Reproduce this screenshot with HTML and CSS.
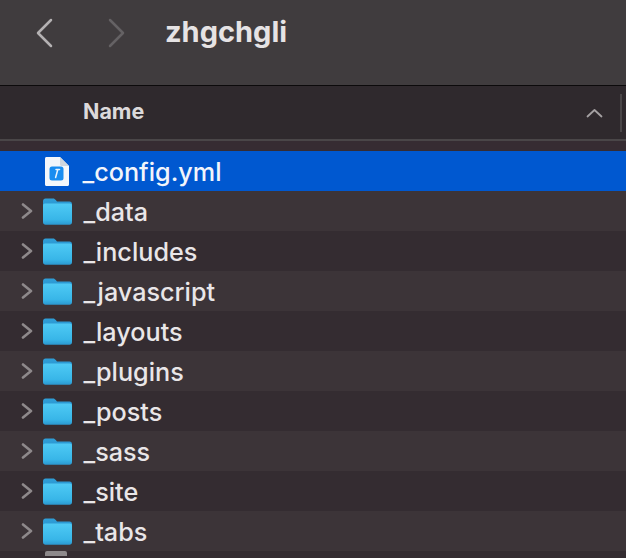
FILE: index.html
```html
<!DOCTYPE html>
<html>
<head>
    <title>zhgchgli</title>
    <link rel="stylesheet" href="styles.css">
</head>
<body>
    <svg class="defs" width="0" height="0">
        <defs>
            <linearGradient id="folderBack" x1="0" y1="0" x2="0" y2="1">
                <stop offset="0" stop-color="#2f9fd8"/>
                <stop offset="1" stop-color="#2a93cf"/>
            </linearGradient>
            <linearGradient id="folderFront" x1="0" y1="0" x2="0" y2="1">
                <stop offset="0" stop-color="#4fcaf5"/>
                <stop offset="0.75" stop-color="#38b6e8"/>
                <stop offset="1" stop-color="#2b98d0"/>
            </linearGradient>
            <symbol id="folder" viewBox="0 0 29 27">
                <path d="M0 3.500C0 1.500 1 .5 2.500.5h7.500c1.400 0 1.900.6 2.800 1.600L14 3.500h12.500c1.600 0 2.500 1 2.500 2.500v4H0z" fill="url(#folderBack)"/>
                <path d="M0 7.500C0 6.300 .8 5.500 2 5.500h25c1.200 0 2 .8 2 2V24c0 1.700-1 2.700-2.500 2.700h-24C1 26.700 0 25.700 0 24z" fill="url(#folderFront)"/>
            </symbol>
            <symbol id="chevron" viewBox="0 0 12 16">
                <path d="M2 1.500l8 6.500-8 6.500" fill="none" stroke="#8e898b" stroke-width="2.600" stroke-linecap="round" stroke-linejoin="round"/>
            </symbol>
        </defs>
    </svg>

    <div class="toolbar">
        <svg class="nav-arrow" width="18" height="30" viewBox="0 0 18 30">
            <path d="M16 2L3 15l13 13" fill="none" stroke="#b5b2b3" stroke-width="2.500" stroke-linecap="round" stroke-linejoin="round"/>
        </svg>
        <svg class="nav-arrow nav-forward" width="18" height="30" viewBox="0 0 18 30">
            <path d="M2 2l13 13L2 28" fill="none" stroke="#656264" stroke-width="2.500" stroke-linecap="round" stroke-linejoin="round"/>
        </svg>
        <h1 class="title">zhgchgli</h1>
    </div>

    <div class="col-header">
        <span class="col-name">Name</span>
        <svg class="sort-arrow" width="17" height="10" viewBox="0 0 17 10">
            <path d="M1.500 8.500L8.500 2l7 6.500" fill="none" stroke="#a5a1a3" stroke-width="1.800" stroke-linecap="round" stroke-linejoin="round"/>
        </svg>
        <span class="col-divider"></span>
    </div>

    <div class="gap-row"></div>

    <div class="row selected">
        <span class="twist"></span>
        <svg class="file-icon" width="24" height="29" viewBox="0 0 24 29">
            <path d="M1.500 0H15l9 9v18.500c0 .9-.6 1.500-1.500 1.500h-21C.6 29 0 28.400 0 27.500v-26C0 .6.600 0 1.500 0z" fill="#f4f7fb"/>
            <path d="M15 0l9 9h-7.500C15.600 9 15 8.400 15 7.500z" fill="#cfd6de"/>
            <rect x="4.500" y="9.500" width="14" height="14" rx="2.500" fill="#1a8df0"/>
            <path d="M11 12.500h3.500M12.800 12.500l-2.200 8" fill="none" stroke="#eaf4fd" stroke-width="1.500" stroke-linecap="round"/>
        </svg>
        <span class="name">_config.yml</span>
    </div>
    <div class="row alt">
        <svg class="twist" width="12" height="16"><use href="#chevron"/></svg>
        <svg class="folder" width="29" height="27"><use href="#folder"/></svg>
        <span class="name">_data</span>
    </div>
    <div class="row">
        <svg class="twist" width="12" height="16"><use href="#chevron"/></svg>
        <svg class="folder" width="29" height="27"><use href="#folder"/></svg>
        <span class="name">_includes</span>
    </div>
    <div class="row alt">
        <svg class="twist" width="12" height="16"><use href="#chevron"/></svg>
        <svg class="folder" width="29" height="27"><use href="#folder"/></svg>
        <span class="name">_javascript</span>
    </div>
    <div class="row">
        <svg class="twist" width="12" height="16"><use href="#chevron"/></svg>
        <svg class="folder" width="29" height="27"><use href="#folder"/></svg>
        <span class="name">_layouts</span>
    </div>
    <div class="row alt">
        <svg class="twist" width="12" height="16"><use href="#chevron"/></svg>
        <svg class="folder" width="29" height="27"><use href="#folder"/></svg>
        <span class="name">_plugins</span>
    </div>
    <div class="row">
        <svg class="twist" width="12" height="16"><use href="#chevron"/></svg>
        <svg class="folder" width="29" height="27"><use href="#folder"/></svg>
        <span class="name">_posts</span>
    </div>
    <div class="row alt">
        <svg class="twist" width="12" height="16"><use href="#chevron"/></svg>
        <svg class="folder" width="29" height="27"><use href="#folder"/></svg>
        <span class="name">_sass</span>
    </div>
    <div class="row">
        <svg class="twist" width="12" height="16"><use href="#chevron"/></svg>
        <svg class="folder" width="29" height="27"><use href="#folder"/></svg>
        <span class="name">_site</span>
    </div>
    <div class="row alt">
        <svg class="twist" width="12" height="16"><use href="#chevron"/></svg>
        <svg class="folder" width="29" height="27"><use href="#folder"/></svg>
        <span class="name">_tabs</span>
    </div>
    <div class="row last">
        <span class="twist"></span>
        <span class="peek"></span>
    </div>
</body>
</html>
```

FILE: styles.css
```css
html, body {
    margin: 0;
    height: 558px;
    overflow: hidden;
}

body {
    background-color: #362e33;
    font-family: "Inter", "Liberation Sans", sans-serif;
    color: #e9e6e8;
}

.defs {
    display: block;
    height: 0;
}

.toolbar {
    height: 86px;
    display: flex;
    align-items: flex-start;
    padding-top: 18px;
    padding-left: 35px;
    box-sizing: border-box;
    background-color: #403c3e;
    border-bottom: 1px solid #0c0a0b;
}

.nav-forward {
    margin-left: 55px;
}

.title {
    margin: -3px 0 0 39px;
    font-size: 29px;
    font-weight: 700;
    line-height: 34px;
    color: #e6e3e4;
}

.col-header {
    height: 55px;
    display: flex;
    align-items: center;
    box-sizing: border-box;
    padding-left: 83px;
    padding-bottom: 4px;
    background-color: #2f292d;
    border-bottom: 2px solid #4a4648;
}

.col-name {
    font-size: 21.5px;
    font-weight: 700;
    color: #dcd9db;
}

.sort-arrow {
    margin-left: auto;
    margin-top: 4px;
}

.col-divider {
    width: 2px;
    height: 38px;
    margin: 4px 4px 0 17px;
    background-color: #4a4648;
}

.gap-row {
    height: 10px;
    background-color: #362c32;
}

.row {
    height: 40px;
    display: flex;
    align-items: center;
    padding-left: 21px;
    background-color: #342c31;
}

.row.alt {
    background-color: #3c3438;
}

.row.selected {
    background-color: #0058d0;
}

.row.last {
    height: 7px;
    align-items: flex-start;
}

.twist {
    width: 12px;
    height: 16px;
    flex: none;
}

.folder {
    margin-left: 10px;
    flex: none;
}

.file-icon {
    margin-left: 12px;
    margin-right: 2px;
    flex: none;
}

.name {
    margin-left: 11.500px;
    padding-top: 1px;
    font-size: 25.2px;
    font-weight: 500;
    line-height: 30px;
    white-space: nowrap;
}

.selected .name {
    color: #f2f5fb;
}

.peek {
    width: 22px;
    height: 5px;
    margin-left: 12px;
    background-color: #8d898b;
    border-radius: 2px 2px 0 0;
}
```
